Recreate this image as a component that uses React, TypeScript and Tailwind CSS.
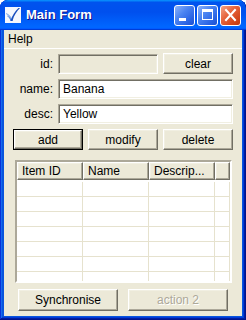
import React, { FC, ReactNode } from "react";

const raised =
  "border border-t-white border-l-white border-b-[#716F64] border-r-[#716F64] shadow-[inset_-1px_-1px_#ACA899,inset_1px_1px_#F1EFE2]";
const sunken =
  "border border-t-[#ACA899] border-l-[#ACA899] border-b-white border-r-white shadow-[inset_1px_1px_#716F64,inset_-1px_-1px_#F1EFE2]";

const Button: FC<{
  children: ReactNode;
  className?: string;
  isDefault?: boolean;
  disabled?: boolean;
}> = function ({ children, className = "", isDefault, disabled }) {
  if (isDefault)
    return (
      <div className={"border border-black flex " + className}>
        <div className={"flex-1 flex items-center justify-center bg-[#ECE9D8] " + raised}>
          {children}
        </div>
      </div>
    );
  return (
    <div
      className={
        "flex items-center justify-center bg-[#ECE9D8] " +
        raised +
        " " +
        (disabled ? "text-[#ACA899] [text-shadow:1px_1px_#ffffff] " : "") +
        className
      }
    >
      {children}
    </div>
  );
};

const TitleIcon = () => (
  <svg width="16" height="16" viewBox="0 0 16 16">
    <rect x="0" y="0" width="16" height="16" fill="#F4F7FD" />
    <path d="M1 7 C3 8 5 10 6 14 L8 14 C6 9 4 7 1 6 Z" fill="#8DB2EA" />
    <path d="M2 9 C4 10 5 12 5.5 14 L7 14 C6 11 4 9.5 2 8.5 Z" fill="#4B7FDA" />
    <path d="M5.5 14 L7.5 14 C9 8 12 4 15 1 L13.5 1 C10 4 7.5 8 5.5 14 Z" fill="#1A4FBE" />
  </svg>
);

const TitleButton: FC<{ kind: "min" | "max" | "close" }> = function ({ kind }) {
  const bg =
    kind === "close"
      ? "bg-[linear-gradient(135deg,#F3A487_0%,#E6653D_40%,#D4471C_75%,#C03A12_100%)]"
      : "bg-[linear-gradient(135deg,#8BB2FA_0%,#4A83F1_40%,#2B64E4_75%,#1D4FD0_100%)]";
  return (
    <div className={"w-[21px] h-[21px] rounded-[3px] border border-white flex " + bg}>
      <svg width="19" height="19" viewBox="0 0 19 19">
        {kind === "min" && <rect x="4" y="12" width="7" height="3" fill="#fff" />}
        {kind === "max" && (
          <>
            <rect x="4" y="3" width="11" height="3" fill="#fff" />
            <rect x="4.5" y="3.5" width="10" height="10" fill="none" stroke="#fff" strokeWidth="1" />
          </>
        )}
        {kind === "close" && (
          <path d="M5 4 L14 14 M14 4 L5 14" stroke="#fff" strokeWidth="2" strokeLinecap="square" />
        )}
      </svg>
    </div>
  );
};

const Field: FC<{ label: string; value?: string; className?: string; disabled?: boolean }> =
  function ({ label, value, className = "", disabled }) {
    return (
      <>
        <div className="w-[49px] text-right">{label}</div>
        <div
          className={
            "h-[20px] flex items-center pl-[4px] " +
            sunken +
            " " +
            (disabled ? "bg-[#ECE9D8] " : "bg-white ") +
            className
          }
        >
          {value}
        </div>
      </>
    );
  };

const columns = ["Item ID", "Name", "Descrip..."];

const App: FC = function () {
  const rows = Array.from({ length: 8 });
  return (
    <div className="w-[246px] h-[320px] flex flex-col rounded-t-[8px] bg-[#0855DD] shadow-[inset_-1px_-1px_#00138c,inset_1px_1px_#0831d9,inset_-2px_-2px_#001ea0,inset_2px_2px_#166aee,inset_-3px_-3px_#003bda,inset_3px_3px_#0855dd] font-['Liberation_Sans',Arial,sans-serif] text-[12px] text-black overflow-hidden">
      {/* title bar */}
      <div className="h-[30px] shrink-0 rounded-t-[8px] flex items-center pl-[5px] pr-[5px] bg-[linear-gradient(to_bottom,#0997FF_0%,#0053EE_8%,#0050EE_40%,#0066FF_88%,#0066FF_93%,#005BFF_95%,#003DD7_96%,#003DD7_100%)]">
        <TitleIcon />
        <span className="ml-[5px] text-white font-bold text-[13px] [text-shadow:1px_1px_#0F1089]">
          Main Form
        </span>
        <div className="ml-auto flex gap-[2px]">
          <TitleButton kind="min" />
          <TitleButton kind="max" />
          <TitleButton kind="close" />
        </div>
      </div>

      <div className="flex-1 flex px-[4px] pb-[4px]">
        <div className="flex-1 flex flex-col bg-[#ECE9D8]">
          {/* menu */}
          <div className="h-[19px] shrink-0 border-b border-white flex items-center px-[4px]">
            Help
          </div>

          {/* form */}
          <div className="flex flex-col gap-[4px] pt-[4px]">
            <div className="h-[21px] flex items-center gap-[5px]">
              <Field label="id:" disabled className="w-[100px]" />
              <Button className="w-[70px] h-[21px]">clear</Button>
            </div>
            <div className="h-[21px] flex items-center gap-[5px]">
              <Field label="name:" value="Banana" className="w-[175px]" />
            </div>
            <div className="h-[21px] flex items-center gap-[5px]">
              <Field label="desc:" value="Yellow" className="w-[175px]" />
            </div>
          </div>

          <div className="flex gap-[5px] mt-[5px] ml-[9px]">
            <Button isDefault className="w-[70px] h-[21px]">
              add
            </Button>
            <Button className="w-[70px] h-[21px]">modify</Button>
            <Button className="w-[70px] h-[21px]">delete</Button>
          </div>

          {/* list */}
          <div className="mt-[10px] ml-[11px] w-[217px] h-[123px] border-2 border-t-[#ACA899] border-l-[#ACA899] border-b-white border-r-white bg-white flex flex-col overflow-hidden">
            <div className="flex h-[18px] shrink-0 bg-[#ECE9D8]">
              {columns.map((c) => (
                <div key={c} className={"w-[66px] flex items-center pl-[4px] " + raised}>
                  {c}
                </div>
              ))}
              <div className={"flex-1 " + raised} />
            </div>
            <div className="flex-1 pt-[2px] overflow-hidden">
              {rows.map((_, i) => (
                <div key={i} className="flex h-[15px] border-b border-[#E6E2CE]">
                  <div className="w-[66px] border-r border-[#E6E2CE]" />
                  <div className="w-[66px] border-r border-[#E6E2CE]" />
                  <div className="w-[66px] border-r border-[#E6E2CE]" />
                  <div className="flex-1 border-r border-[#E6E2CE]" />
                </div>
              ))}
            </div>
          </div>

          <div className="flex gap-[10px] mt-[6px] ml-[14px]">
            <Button className="w-[100px] h-[22px]">Synchronise</Button>
            <Button disabled className="w-[100px] h-[22px]">
              action 2
            </Button>
          </div>
        </div>
      </div>
    </div>
  );
};

export default App;
